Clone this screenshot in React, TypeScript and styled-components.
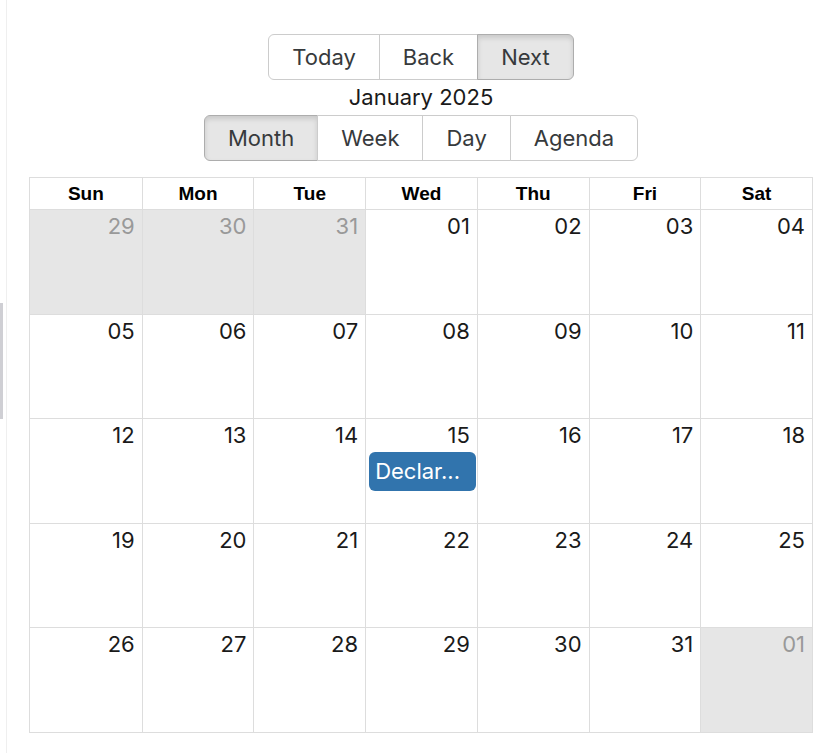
import styled, { createGlobalStyle } from "styled-components";

const GlobalStyle = createGlobalStyle`
  html, body {
    margin: 0;
    padding: 0;
    background: #fff;
  }
  body {
    font-family: Inter, "Noto Sans", sans-serif;
    color: #1a1a1a;
  }
`;

type Day = { n: string; off?: boolean; events?: string[] };

const weeks: Day[][] = [
  [
    { n: "29", off: true },
    { n: "30", off: true },
    { n: "31", off: true },
    { n: "01" },
    { n: "02" },
    { n: "03" },
    { n: "04" },
  ],
  ["05", "06", "07", "08", "09", "10", "11"].map((n) => ({ n })),
  [
    { n: "12" },
    { n: "13" },
    { n: "14" },
    { n: "15", events: ["Declar..."] },
    { n: "16" },
    { n: "17" },
    { n: "18" },
  ],
  ["19", "20", "21", "22", "23", "24", "25"].map((n) => ({ n })),
  [
    { n: "26" },
    { n: "27" },
    { n: "28" },
    { n: "29" },
    { n: "30" },
    { n: "31" },
    { n: "01", off: true },
  ],
];

const weekdays = ["Sun", "Mon", "Tue", "Wed", "Thu", "Fri", "Sat"];

export default function App() {
  return (
    <>
      <GlobalStyle />
      <Page>
        <Rail>
          <Thumb />
        </Rail>
        <Main>
          <Toolbar>
            <ButtonGroup>
              <ToolButton>Today</ToolButton>
              <ToolButton>Back</ToolButton>
              <ToolButton $active>Next</ToolButton>
            </ButtonGroup>
            <Label>January 2025</Label>
            <ButtonGroup>
              <ToolButton $active>Month</ToolButton>
              <ToolButton>Week</ToolButton>
              <ToolButton>Day</ToolButton>
              <ToolButton>Agenda</ToolButton>
            </ButtonGroup>
          </Toolbar>
          <MonthView>
            <HeaderRow>
              {weekdays.map((d) => (
                <HeaderCell key={d}>{d}</HeaderCell>
              ))}
            </HeaderRow>
            {weeks.map((week, i) => (
              <WeekRow key={i}>
                {week.map((day, j) => (
                  <DayCell key={j} $off={day.off}>
                    <DateLabel $off={day.off}>{day.n}</DateLabel>
                    {day.events?.map((e) => (
                      <Event key={e}>{e}</Event>
                    ))}
                  </DayCell>
                ))}
              </WeekRow>
            ))}
          </MonthView>
        </Main>
      </Page>
    </>
  );
}

const Page = styled.div`
  display: flex;
  min-height: 753px;
`;

const Rail = styled.aside`
  width: 6px;
  flex-shrink: 0;
  border-right: 1px solid #efefef;
  display: flex;
  flex-direction: column;
`;

const Thumb = styled.div`
  width: 3px;
  height: 116px;
  margin-top: 303px;
  background: #cfcfd4;
`;

const Main = styled.main`
  flex: 1;
  padding: 34px 17px 0 22px;
`;

const Toolbar = styled.div`
  display: flex;
  flex-direction: column;
  align-items: center;
  margin-bottom: 16px;
`;

const ButtonGroup = styled.div`
  display: flex;
  & > button + button {
    margin-left: -1px;
  }
  & > button:first-child {
    border-radius: 6px 0 0 6px;
  }
  & > button:last-child {
    border-radius: 0 6px 6px 0;
  }
`;

const ToolButton = styled.button<{ $active?: boolean }>`
  height: 46px;
  padding: 0 23px;
  font-family: Inter, "Noto Sans", sans-serif;
  font-size: 22px;
  color: #373a3c;
  background: ${(p) => (p.$active ? "#e6e6e6" : "#fff")};
  border: 1px solid ${(p) => (p.$active ? "#adadad" : "#cccccc")};
  box-shadow: ${(p) =>
    p.$active ? "inset 0 3px 5px rgba(0, 0, 0, 0.125)" : "none"};
  border-radius: 0;
  cursor: pointer;
`;

const Label = styled.div`
  font-size: 22px;
  line-height: 35px;
  color: #1a1a1a;
`;

const MonthView = styled.div`
  height: 556px;
  box-sizing: border-box;
  border: 1px solid #dddddd;
  display: flex;
  flex-direction: column;
`;

const HeaderRow = styled.div`
  display: grid;
  grid-template-columns: repeat(7, 1fr);
  border-bottom: 1px solid #dddddd;
`;

const HeaderCell = styled.div`
  height: 31px;
  display: flex;
  align-items: center;
  justify-content: center;
  font-family: "Liberation Sans", Arial, sans-serif;
  font-weight: 700;
  font-size: 19px;
  color: #000;
  & + & {
    border-left: 1px solid #dddddd;
  }
`;

const WeekRow = styled.div`
  flex: 1;
  display: grid;
  grid-template-columns: repeat(7, 1fr);
  & + & {
    border-top: 1px solid #dddddd;
  }
`;

const DayCell = styled.div<{ $off?: boolean }>`
  display: flex;
  flex-direction: column;
  padding-top: 3px;
  background: ${(p) => (p.$off ? "#e6e6e6" : "#fff")};
  min-width: 0;
  & + & {
    border-left: 1px solid #dddddd;
  }
`;

const DateLabel = styled.div<{ $off?: boolean }>`
  text-align: right;
  padding-right: 7px;
  font-size: 22px;
  line-height: 27px;
  color: ${(p) => (p.$off ? "#999999" : "#1a1a1a")};
`;

const Event = styled.div`
  margin: 3px 1px 0 3px;
  padding: 6px 6px;
  background: #3174ad;
  color: #fff;
  border-radius: 6px;
  font-size: 22px;
  line-height: 27px;
  white-space: nowrap;
  overflow: hidden;
`;
